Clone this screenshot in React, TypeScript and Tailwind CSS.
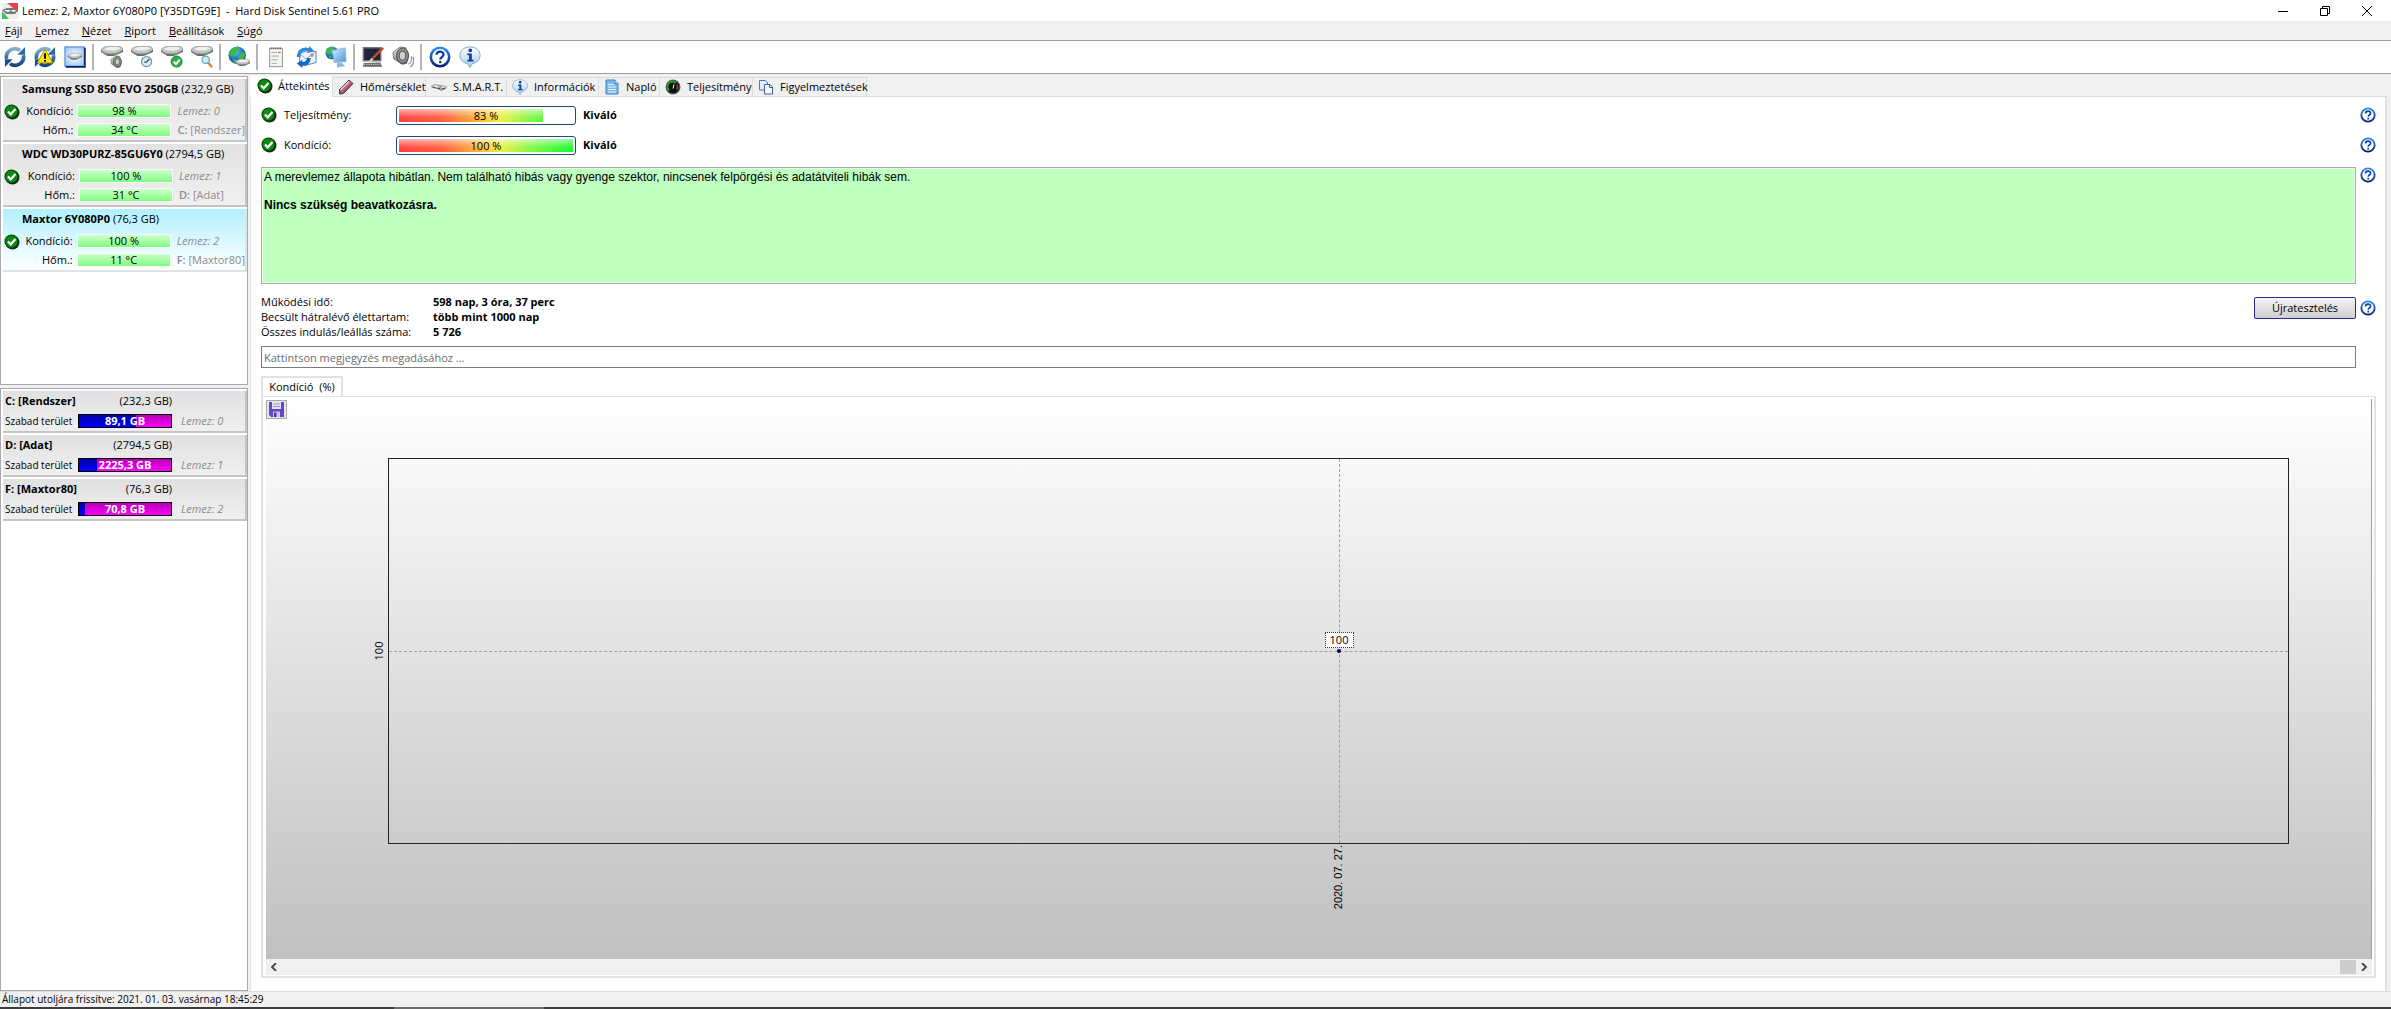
import { useState } from "react";

const disks = [
  { name: "Samsung SSD 850 EVO 250GB", size: "232,9 GB", health: "98 %", temp: "34 °C", index: 0, letter: "C:", label: "[Rendszer]" },
  { name: "WDC WD30PURZ-85GU6Y0", size: "2794,5 GB", health: "100 %", temp: "31 °C", index: 1, letter: "D:", label: "[Adat]" },
  { name: "Maxtor 6Y080P0", size: "76,3 GB", health: "100 %", temp: "11 °C", index: 2, letter: "F:", label: "[Maxtor80]" },
];

const volumes = [
  { name: "C: [Rendszer]", size: "(232,3 GB)", free: "89,1 GB", used: 62, index: 0 },
  { name: "D: [Adat]", size: "(2794,5 GB)", free: "2225,3 GB", used: 20, index: 1 },
  { name: "F: [Maxtor80]", size: "(76,3 GB)", free: "70,8 GB", used: 7, index: 2 },
];

const menu = ["Fájl", "Lemez", "Nézet", "Riport", "Beállítások", "Súgó"];

function Defs() {
  return (
    <svg className="absolute w-0 h-0" aria-hidden="true">
      <defs>
        <linearGradient id="steel" x1="0" y1="0" x2="0" y2="1">
          <stop offset="0" stopColor="#f4f4f4" />
          <stop offset="0.5" stopColor="#b9b9b9" />
          <stop offset="1" stopColor="#6f6f6f" />
        </linearGradient>
        <linearGradient id="arrow" gradientUnits="userSpaceOnUse" x1="0" y1="0" x2="0" y2="24">
          <stop offset="0" stopColor="#9fc0da" />
          <stop offset="0.5" stopColor="#3a70a8" />
          <stop offset="1" stopColor="#0f3a74" />
        </linearGradient>
        <linearGradient id="ring" x1="0" y1="0" x2="0" y2="1">
          <stop offset="0" stopColor="#2f8fe8" />
          <stop offset="1" stopColor="#03207a" />
        </linearGradient>
        <linearGradient id="bubble" x1="0" y1="0" x2="0" y2="1">
          <stop offset="0" stopColor="#ffffff" />
          <stop offset="1" stopColor="#a5cdee" />
        </linearGradient>
        <linearGradient id="screen" x1="0" y1="0" x2="1" y2="1">
          <stop offset="0" stopColor="#d9f1ff" />
          <stop offset="1" stopColor="#3e93d9" />
        </linearGradient>
        <radialGradient id="panel" cx="0.5" cy="0.5" r="0.7">
          <stop offset="0" stopColor="#ffffff" />
          <stop offset="1" stopColor="#8fc0f2" />
        </radialGradient>
        <radialGradient id="globe" cx="0.4" cy="0.3" r="0.8">
          <stop offset="0" stopColor="#5fc4ff" />
          <stop offset="0.6" stopColor="#1568c4" />
          <stop offset="1" stopColor="#06306e" />
        </radialGradient>
      </defs>
    </svg>
  );
}

function CheckIcon() {
  return (
    <svg viewBox="0 0 16 16" className="w-4 h-4 shrink-0">
      <circle cx="8.5" cy="8.5" r="7" fill="#222" />
      <circle cx="7.5" cy="7.5" r="7" fill="#063f06" />
      <circle cx="7.5" cy="7.5" r="6" fill="#0b8a12" />
      <path d="M4 7.5l2.7 2.8L11.5 5" fill="none" stroke="#fff" strokeWidth="2.2" />
    </svg>
  );
}

function HelpIcon({ className }: { className: string }) {
  return (
    <svg viewBox="0 0 24 24" className={className}>
      <circle cx="12" cy="12" r="10" fill="#fff" stroke="url(#ring)" strokeWidth="2.8" />
      <path
        d="M8.3 9.6c0-4.6 7.6-4.6 7.6-.3 0 2.6-3.6 2.6-3.6 5.4"
        fill="none"
        stroke="#0c3f9c"
        strokeWidth="2.5"
      />
      <rect x="11" y="16.2" width="2.6" height="2.6" fill="#0c3f9c" />
    </svg>
  );
}

function InfoIcon({ className }: { className: string }) {
  return (
    <svg viewBox="0 0 24 24" className={className}>
      <path
        d="M12 1c6.500 0 11 3.900 11 9.300 0 4.700-3.700 8.200-8.400 8.900L12 23.500l-2.600-4.300C4.700 18.500 1 15 1 10.300 1 4.900 5.500 1 12 1z"
        fill="url(#bubble)"
        stroke="#7c9fc4"
      />
      <circle cx="12.300" cy="4.800" r="2" fill="#123f9c" />
      <path d="M9 8.300h5v6.700h2v1.800H9V15h2v-4.900H9z" fill="#123f9c" />
    </svg>
  );
}

function Drive({ x = 0, y = 0, s = 1 }: { x?: number; y?: number; s?: number }) {
  return (
    <g transform={`translate(${x} ${y}) scale(${s})`}>
      <path d="M0 6v2.500l7 4.500h7l10-4.500V6z" fill="#6d6d6d" />
      <path d="M0 6c0-1 5-4 9-4h9c3 0 6 2 6 3.500 0 1-6 5-9.500 5H8C5 10.500 0 7.500 0 6z" fill="#c2c2c2" stroke="#8a8a8a" strokeWidth="0.6" />
      <path d="M3 5.500C5 4 7 3 10 3h7c2 0 4 1 4 2l-6 2H8z" fill="#f0f0f0" />
      <path d="M13 11.500l3-1" stroke="#2fbf2f" strokeWidth="1.800" />
    </g>
  );
}

function Globe({ x, y, r }: { x: number; y: number; r: number }) {
  return (
    <g transform={`translate(${x} ${y}) scale(${r / 10})`}>
      <circle r="10" fill="url(#globe)" />
      <path d="M-8-5C-5-9-1-10 2-9.500L3-6-1-4-2 0-6 2-9.500-1zM3-1l5-3 1.500 4L6 6 3 7 1 3zM-5 4l4 1 1 4-4-.5z" fill="#41b83c" />
    </g>
  );
}

function Refresh() {
  return (
    <g fill="none" stroke="url(#arrow)" strokeWidth="4">
      <path d="M2.800 14A9.300 9.300 0 0 1 17.500 4.800" />
      <path d="M21.200 10A9.300 9.300 0 0 1 6.500 19.200" />
      <path d="M23 1v8.500h-8.500z" fill="#2f669f" stroke="none" />
      <path d="M1 23v-8.500h8.500z" fill="#1d4d88" stroke="none" />
    </g>
  );
}

function Speaker({ x = 0, y = 0, s = 1 }: { x?: number; y?: number; s?: number }) {
  return (
    <g transform={`translate(${x} ${y}) scale(${s})`}>
      <path d="M1 7l8-6 6 1 3 9-2 8-5 1-9-6z" fill="url(#steel)" stroke="#555" strokeWidth="0.8" />
      <ellipse cx="11.500" cy="10.500" rx="6.500" ry="8.500" fill="#8b8b8b" stroke="#3f3f3f" />
      <ellipse cx="11.500" cy="10.500" rx="3.500" ry="4.800" fill="#d0d0d0" stroke="#4c4c4c" />
    </g>
  );
}

const tools: { [key: string]: any } = {
  Frissítés: <Refresh />,
  Figyelmeztetés: (
    <>
      <Refresh />
      <path d="M12 3.500l8.500 15h-17z" fill="#ffe808" stroke="#a48b00" />
      <path d="M12 8v6M12 15.200v2" stroke="#111" strokeWidth="2.200" />
    </>
  ),
  Lemezek: (
    <>
      <rect x="1" y="1" width="21" height="21" fill="url(#panel)" stroke="#3f78c8" />
      <path d="M22.800 2v20.800H2" stroke="#06205c" strokeWidth="1.800" fill="none" />
      <Drive x={4} y={6.500} s={0.65} />
    </>
  ),
  Hang: (
    <>
      <Drive y={-2} />
      <Speaker x={10} y={10} s={0.68} />
    </>
  ),
  Ütemezés: (
    <>
      <Drive y={-2} />
      <circle cx="17" cy="17" r="5.500" fill="#d5ebfa" stroke="#7f98ac" strokeWidth="1.400" />
      <path d="M17 17.500l3-3.500M17 17.500h-2.500" stroke="#345" strokeWidth="1.300" />
    </>
  ),
  Ellenőrzés: (
    <>
      <Drive y={-2} />
      <circle cx="17" cy="17" r="6" fill="#2fae4c" stroke="#168033" />
      <path d="M13.800 17l2.500 2.700 4.200-4.800" fill="none" stroke="#fff" strokeWidth="2.200" />
    </>
  ),
  Keresés: (
    <>
      <Drive y={-2} />
      <path d="M18.500 18l4.500 5" stroke="#d98a2b" strokeWidth="2.600" />
      <circle cx="16" cy="15" r="4" fill="#c8ecff" stroke="#6d9cc0" strokeWidth="1.300" />
    </>
  ),
  Internet: (
    <>
      <Globe x={10} y={10} r={9.5} />
      <Drive x={8} y={13} s={0.68} />
    </>
  ),
  Napló: (
    <>
      <path d="M5 2.500h14v20H5z" fill="#f3f6ef" stroke="#8a9088" />
      <path d="M6 2.500h12" stroke="#666" strokeWidth="2" strokeDasharray="1.500 1" />
      <path d="M7 7h6M7 11h8M7 15h7M7 19h6" stroke="#9aa89c" />
      <path d="M14 7h3" stroke="#c33" />
    </>
  ),
  Küldés: (
    <>
      <path d="M5 8l9-3 9 1v12l-11 3-7-3z" fill="#e7f3fd" stroke="#3b84cf" />
      <path d="M5 8.500l7 5.500L23 6.500" stroke="#7fb0dd" fill="none" />
      <path d="M2 12C2 4 9 0 15 2.500L16 0l5 6-8 1.500 1-2C9 4.500 6 7 6 12z" fill="#2f86dc" />
      <path d="M17 13c0 5-3 9-9 8.500V24l-6-5 6-4v2.500c3 0 5-1.500 5-4.500z" fill="#1667bf" />
      <rect x="17" y="8.500" width="3" height="3" fill="#e0703a" />
    </>
  ),
  Hálózat: (
    <>
      <Globe x={7.5} y={7.5} r={7} />
      <path d="M8 5l14-3 1 15-13 1z" fill="url(#screen)" stroke="#9ab6cf" />
      <path d="M13 18h5l4 4-9 1.500z" fill="#8db8e0" />
    </>
  ),
  Teszt: (
    <>
      <path d="M1.500 2h19v14h-19z" fill="#20243a" stroke="#777" strokeWidth="1.600" />
      <path d="M2 18.500l18-.5 2 4.500H1z" fill="#666" />
      <path d="M2 20h18" stroke="#ddd" strokeDasharray="1.500 1" />
      <path d="M10 13L22 1l2 2-12 12z" fill="#c2452a" />
      <path d="M7 18l3-5 2.500 2z" fill="#f5dcae" />
    </>
  ),
  Hangszóró: (
    <>
      <Speaker />
      <path d="M18 20c3-2 4-6 3-9M20 23c4-3 4-8 3-11" stroke="#8f8fc4" fill="none" strokeWidth="1.400" />
    </>
  ),
};

const toolGroups = [
  ["Frissítés", "Figyelmeztetés", "Lemezek"],
  ["Hang", "Ütemezés", "Ellenőrzés", "Keresés"],
  ["Internet"],
  ["Napló", "Küldés", "Hálózat"],
  ["Teszt", "Hangszóró"],
];

function ToolButton({ title, children }: { title: string; children: any }) {
  return (
    <button aria-label={title} className="w-[30px] h-[30px] flex items-center justify-center">
      {children}
    </button>
  );
}

function DiskMini({ className }: { className: string }) {
  return (
    <svg viewBox="0 0 16 16" className={className}>
      <path d="M0 7l4-2 5 1 7 1-1 3-5 2-3-2-6-1z" fill="#9a9a9a" />
      <path d="M1 7l4-1 4 2-3 1zM10 8l4-1 1 1-4 2z" fill="#e8e8e8" />
      <path d="M6 9l3 1M11 10l3-1M2 8l3 1" stroke="#444" />
    </svg>
  );
}

const tabs = [
  { name: "Áttekintés", width: "w-[83px]", icon: <CheckIcon /> },
  {
    name: "Hőmérséklet",
    width: "w-[93px]",
    icon: (
      <svg viewBox="0 0 16 16" className="w-4 h-4 shrink-0">
        <path d="M1.500 15v-4.500L11 1l4 3.500-9.500 10z" fill="#6b6b6b" stroke="#3c3c3c" />
        <path d="M3 13L13 3" stroke="#e8508e" strokeWidth="2.400" />
        <path d="M2.500 11L11 2.500" stroke="#e4e4e4" strokeWidth="1.300" />
      </svg>
    ),
  },
  { name: "S.M.A.R.T.", width: "w-[81px]", icon: <DiskMini className="w-4 h-4 shrink-0" /> },
  { name: "Információk", width: "w-[92px]", icon: <InfoIcon className="w-4 h-4 shrink-0" /> },
  {
    name: "Napló",
    width: "w-[61px]",
    icon: (
      <svg viewBox="0 0 16 16" className="w-4 h-4 shrink-0">
        <path d="M2 1h9l3 3.500V15H2z" fill="#7ab8f0" stroke="#3f83c6" />
        <path d="M11 1v3.500h3" fill="#fff" stroke="#3f83c6" />
        <path d="M4 5.500h6M4 8h8M4 10.500h8M4 13h8" stroke="#e8f4ff" />
      </svg>
    ),
  },
  {
    name: "Teljesítmény",
    width: "w-[93px]",
    icon: (
      <svg viewBox="0 0 16 16" className="w-4 h-4 shrink-0">
        <circle cx="8" cy="8" r="7.500" fill="#5d5d5d" />
        <circle cx="8" cy="8" r="6.200" fill="#0d120d" />
        <path d="M4 11.500A5 5 0 0 1 11 4" stroke="#1fae2c" strokeWidth="1.800" fill="none" />
        <path d="M12 5.500a5 5 0 0 1 0 5" stroke="#d33" strokeWidth="1.500" fill="none" />
        <path d="M8 9.500l1-4" stroke="#fff" />
      </svg>
    ),
  },
  {
    name: "Figyelmeztetések",
    width: "w-[114px]",
    icon: (
      <svg viewBox="0 0 16 16" className="w-4 h-4 shrink-0">
        <path d="M1.500 1.500h6l2 2V11h-8z" fill="#e4effb" stroke="#4f79b8" />
        <path d="M6.500 5.500h5.500l2.500 2.500v7h-8z" fill="#f5faff" stroke="#3763a8" />
        <path d="M11.500 5.500V8.500h3" fill="none" stroke="#3763a8" />
      </svg>
    ),
  },
];

function HelpButton() {
  return (
    <button aria-label="Súgó" className="w-4 h-4 shrink-0">
      <HelpIcon className="w-4 h-4" />
    </button>
  );
}

function GreenBar({ text }: { text: string }) {
  return (
    <span className="w-[92px] h-3 leading-3 text-center bg-gradient-to-b from-[#ccffcc] to-[#7dff7d] outline outline-white/70">
      {text}
    </span>
  );
}

function DiskCard({ disk, selected, onSelect }: { disk: (typeof disks)[0]; selected: boolean; onSelect: () => void }) {
  return (
    <button
      onClick={onSelect}
      className={
        "block w-full h-[63px] text-left border-r-2 border-b-2 " +
        (selected
          ? "bg-gradient-to-b from-[#b0f0ff] to-white border-[#dfe4e6]"
          : "bg-gradient-to-b from-[#e2e2e2] to-[#f0f0f0] border-[#c4c4c4]")
      }
    >
      <span className="block pl-[19px] pt-px h-[21px] leading-4 whitespace-nowrap">
        <b>{disk.name}</b> ({disk.size})
      </span>
      <span className="flex items-center gap-[5px] pl-px">
        <span className="flex w-[71px] h-[38px]">
          <span className="pt-[3px]">
            <CheckIcon />
          </span>
          <span className="flex-1 flex flex-col text-right leading-[19px]">
            <span>Kondíció:</span>
            <span>Hőm.:</span>
          </span>
        </span>
        <span className="flex flex-col gap-[7px] h-[38px] pt-[4px]">
          <GreenBar text={disk.health} />
          <GreenBar text={disk.temp} />
        </span>
        <span className="flex flex-col pl-[2px] text-[#8c8c8c] leading-[19px] whitespace-nowrap">
          <i>Lemez: {disk.index}</i>
          <span>
            <span className="font-semibold">{disk.letter}</span> {disk.label}
          </span>
        </span>
      </span>
    </button>
  );
}

function VolumeCard({ volume }: { volume: (typeof volumes)[0] }) {
  return (
    <div className="h-[42px] pl-[2px] border-r-2 border-b-2 border-[#c4c4c4] bg-gradient-to-b from-[#e0e0e0] to-[#f0f0f0] whitespace-nowrap">
      <div className="flex justify-between w-[167px] h-[20px] leading-[20px]">
        <b>{volume.name}</b>
        <span>{volume.size}</span>
      </div>
      <div className="flex items-center h-[18px] mt-px">
        <span className="w-[73px] text-[10px]">Szabad terület</span>
        <div className="relative w-[94px] h-[14px] border border-black bg-gradient-to-b from-[#b400b4] to-[#ff00ff]">
          <div className="h-full bg-gradient-to-b from-[#0000a8] to-[#0000ff]" style={{ width: `${volume.used}%` }} />
          <b className="absolute inset-0 leading-3 text-center text-white">{volume.free}</b>
        </div>
        <i className="pl-[9px] text-[#8c8c8c]">Lemez: {volume.index}</i>
      </div>
    </div>
  );
}

function Meter({ label, value }: { label: string; value: number }) {
  return (
    <div className="flex items-center h-[30px]">
      <CheckIcon />
      <span className="w-[119px] pl-[7px]">{label}</span>
      <div className="relative w-[180px] h-[19px] p-[2px] rounded-[3px] border border-[#1f4a78] bg-white">
        <div className="h-full overflow-hidden" style={{ width: `${value}%` }}>
          <div className="w-[174px] h-full bg-[linear-gradient(rgba(255,255,255,.6),rgba(255,255,255,.1)_60%,rgba(255,255,255,0)),linear-gradient(90deg,#ff3a3a,#ff5a3a_25%,#ffb030_45%,#f0f040_58%,#80f840_75%,#10f828)]" />
        </div>
        <span className="absolute inset-0 leading-[17px] text-center">{value} %</span>
      </div>
      <b className="flex-1 pl-[7px]">Kiváló</b>
      <HelpButton />
    </div>
  );
}

function Chart() {
  return (
    <div className="flex-1 flex flex-col min-h-0 pl-[3px] pr-[2px] pt-[2px] pb-px border-2 border-t border-[#e2e2e2]">
      <div className="flex-1 flex flex-col border-r border-[#a0a0a0] bg-gradient-to-b from-white to-[#c0c0c0]">
        <button
          aria-label="Mentés"
          className="w-[21px] h-[19px] mt-px flex items-center justify-center border border-[#a8a8a8] bg-[#e6e6e6]"
        >
          <svg viewBox="0 0 15 15" className="w-[15px] h-[15px]">
            <path d="M0 0h15v15H2L0 13z" fill="#6048c8" />
            <path d="M3 0h9v7H3z" fill="#e8e4fb" />
            <path d="M4 2h7M4 4.500h7" stroke="#9d8fe0" />
            <path d="M4 9.500h7V15H4z" fill="#cfc8f2" />
            <path d="M5 10.500h2.500V15H5z" fill="#4a34b0" />
          </svg>
        </button>
        <div className="flex-1 relative mt-[39px] ml-[122px] mr-[82px] mb-[115px] border border-[#222]">
          <div className="absolute inset-x-0 top-1/2 border-t border-dashed border-[#a0a0a0]" />
          <div className="absolute inset-y-0 left-1/2 border-l border-dashed border-[#a0a0a0]" />
          <div className="absolute left-1/2 top-1/2 w-1 h-1 -ml-[2px] -mt-[2px] rounded-full bg-[#000060]" />
          <div className="absolute left-1/2 top-1/2 w-[29px] h-4 -ml-[14px] -mt-[19px] border border-dotted border-[#333] bg-white text-center leading-[14px]">
            100
          </div>
          <div className="absolute right-full top-1/2 mr-[4px] -translate-y-1/2 [writing-mode:vertical-rl] rotate-180 leading-[13px]">
            100
          </div>
          <div className="absolute left-1/2 top-full mt-[2px] -ml-[7px] [writing-mode:vertical-rl] rotate-180 leading-[13px] whitespace-nowrap font-['Liberation_Sans',sans-serif]">
            2020. 07. 27.
          </div>
        </div>
      </div>
      <div className="flex items-center h-4 bg-[#f0f0f0]">
        <button aria-label="Balra" className="w-4 h-4 flex items-center justify-center">
          <svg viewBox="0 0 8 8" className="w-2 h-2">
            <path d="M6 0L2 4l4 4" fill="none" stroke="#444" strokeWidth="1.800" />
          </svg>
        </button>
        <div className="flex-1 flex justify-end">
          <div className="w-4 h-[14px] bg-[#cdcdcd]" />
        </div>
        <button aria-label="Jobbra" className="w-4 h-4 flex items-center justify-center">
          <svg viewBox="0 0 8 8" className="w-2 h-2">
            <path d="M2 0l4 4-4 4" fill="none" stroke="#444" strokeWidth="1.800" />
          </svg>
        </button>
      </div>
    </div>
  );
}

export default function App() {
  const [selected, setSelected] = useState(2);
  const [tab, setTab] = useState("Áttekintés");
  const [comment, setComment] = useState("");

  return (
    <div className="h-screen flex flex-col bg-white text-black text-[11px] leading-4 font-['Open_Sans','Noto_Sans',sans-serif]">
      <Defs />

      <header className="flex items-center h-[21px] pl-[2px]">
        <svg viewBox="0 0 16 16" className="w-4 h-4">
          <path d="M0 0h16v16H0z" fill="#eee" />
          <path d="M5 0h11v9z" fill="#f04040" />
          <path d="M0 8l7 8H0z" fill="#3fc060" />
          <path d="M0 7l5-2h8l3 2-3 4H4z" fill="#777" />
          <path d="M2 7h5l2 1-4 1zM9 7h4l1 1-3 1z" fill="#fff" />
        </svg>
        <h1 className="flex-1 pl-[4px] whitespace-pre">
          {"Lemez: 2, Maxtor 6Y080P0 [Y35DTG9E]  -  Hard Disk Sentinel 5.61 PRO"}
        </h1>
        <div className="flex pr-[3px]">
          <button aria-label="Kis méret" className="w-[42px] h-5 flex items-center justify-center">
            <svg viewBox="0 0 10 10" className="w-[10px] h-[10px]">
              <path d="M0 5.500h10" stroke="#000" />
            </svg>
          </button>
          <button aria-label="Előző méret" className="w-[42px] h-5 flex items-center justify-center">
            <svg viewBox="0 0 10 10" className="w-[10px] h-[10px]" fill="none" stroke="#000">
              <path d="M.5 2.500h7v7h-7zM2.500 2.500v-2h7v7h-2" />
            </svg>
          </button>
          <button aria-label="Bezárás" className="w-[42px] h-5 flex items-center justify-center">
            <svg viewBox="0 0 10 10" className="w-[10px] h-[10px]">
              <path d="M0 0l10 10M10 0L0 10" stroke="#000" />
            </svg>
          </button>
        </div>
      </header>

      <nav className="flex items-center gap-[13px] h-5 pl-[5px] bg-[#f0f0f0] border-b border-[#a0a0a0]">
        {menu.map((item) => (
          <button key={item}>
            <u>{item[0]}</u>
            {item.slice(1)}
          </button>
        ))}
      </nav>

      <div className="flex items-center h-[33px] border-b border-[#a0a0a0]">
        {toolGroups.map((group, i) => (
          <div key={i} className="flex items-center">
            {group.map((name) => (
              <ToolButton key={name} title={name}>
                <svg viewBox="0 0 24 24" className="w-[22px] h-[22px]">
                  {tools[name]}
                </svg>
              </ToolButton>
            ))}
            <div className="w-[2px] h-[26px] ml-[2px] mr-[3px] bg-[#b4b4b4]" />
          </div>
        ))}
        <ToolButton title="Súgó">
          <HelpIcon className="w-[22px] h-[22px]" />
        </ToolButton>
        <ToolButton title="Névjegy">
          <InfoIcon className="w-[22px] h-[22px]" />
        </ToolButton>
      </div>

      <div className="flex-1 flex min-h-0 bg-[#f0f0f0]">
        <aside className="w-[248px] flex flex-col pt-[2px] shrink-0">
          <div className="h-[309px] flex flex-col gap-[2px] pl-[2px] pt-[2px] border border-[#a8a8b0] bg-white">
            {disks.map((disk) => (
              <DiskCard
                key={disk.index}
                disk={disk}
                selected={selected === disk.index}
                onSelect={() => setSelected(disk.index)}
              />
            ))}
          </div>
          <div className="flex-1 flex flex-col gap-[2px] mt-[3px] pl-[2px] pt-[2px] border border-[#a8a8b0] bg-white">
            {volumes.map((volume) => (
              <VolumeCard key={volume.index} volume={volume} />
            ))}
          </div>
        </aside>

        <main className="flex-1 min-w-0 flex flex-col ml-[2px] mr-[4px] pt-[2px]">
          <div className="flex items-end h-[21px]">
            {tabs.map((t) => (
              <button
                key={t.name}
                onClick={() => setTab(t.name)}
                className={
                  "flex items-center whitespace-nowrap border-r border-[#dcdcdc] " +
                  t.width +
                  (tab === t.name
                    ? " h-[21px] gap-[5px] pb-[2px] pl-[7px] bg-white"
                    : " h-[20px] gap-[6px] pl-[5px] border-t border-b")
                }
              >
                {t.icon}
                {t.name}
              </button>
            ))}
            <div className="flex-1 border-b border-[#dcdcdc]" />
          </div>

          <section className="flex-1 flex flex-col min-h-0 pl-[10px] pr-[9px] pt-[3px] pb-[13px] bg-white border-l border-r-2 border-[#e2e2e2]">
            <Meter label="Teljesítmény:" value={83} />
            <Meter label="Kondíció:" value={100} />

            <div className="flex gap-1 mt-[7px]">
              <div className="flex-1 h-[117px] p-[2px] border border-[#a8a8b0] bg-[#bfffbf] text-[12px] leading-[14px] font-['Liberation_Sans',sans-serif] outline outline-offset-[-2px] outline-white/60">
                <p>
                  A merevlemez állapota hibátlan. Nem található hibás vagy gyenge szektor, nincsenek felpörgési és
                  adatátviteli hibák sem.
                </p>
                <p className="mt-[14px] font-bold">Nincs szükség beavatkozásra.</p>
              </div>
              <HelpButton />
            </div>

            <div className="flex items-start gap-1 mt-[10px]">
              <dl className="flex-1 grid grid-cols-[172px_1fr] leading-[15px]">
                <dt>Működési idő:</dt>
                <dd className="font-bold">598 nap, 3 óra, 37 perc</dd>
                <dt>Becsült hátralévő élettartam:</dt>
                <dd className="font-bold">több mint 1000 nap</dd>
                <dt>Összes indulás/leállás száma:</dt>
                <dd className="font-bold">5 726</dd>
              </dl>
              <div className="flex items-center gap-1 mt-[3px]">
                <button className="w-[102px] h-[22px] rounded-[2px] border border-[#2c2c8c] bg-gradient-to-b from-[#f4f4f4] to-[#cfcfcf]">
                  Újratesztelés
                </button>
                <HelpButton />
              </div>
            </div>

            <input
              aria-label="Megjegyzés"
              value={comment}
              onChange={(e) => setComment(e.target.value)}
              placeholder="Kattintson megjegyzés megadásához ..."
              className="h-[22px] mt-[7px] mr-5 px-[2px] border border-[#7c7c7c] placeholder:text-[#6d6d6d]"
            />

            <div className="flex mt-[8px]">
              <button className="h-[20px] w-[82px] border-2 border-b-0 border-[#e2e2e2] whitespace-pre">
                {"Kondíció  (%)"}
              </button>
            </div>
            <Chart />
          </section>
        </main>
      </div>

      <footer className="h-4 pl-[2px] text-[10px] leading-[15px] bg-[#f0f0f0] border-t border-[#dcdcdc]">
        Állapot utoljára frissítve: 2021. 01. 03. vasárnap 18:45:29
      </footer>
      <div className="h-[2px] flex bg-[#3c3c3c]">
        <div className="ml-[394px] w-[150px] bg-[#6c6c6c]" />
      </div>
    </div>
  );
}
